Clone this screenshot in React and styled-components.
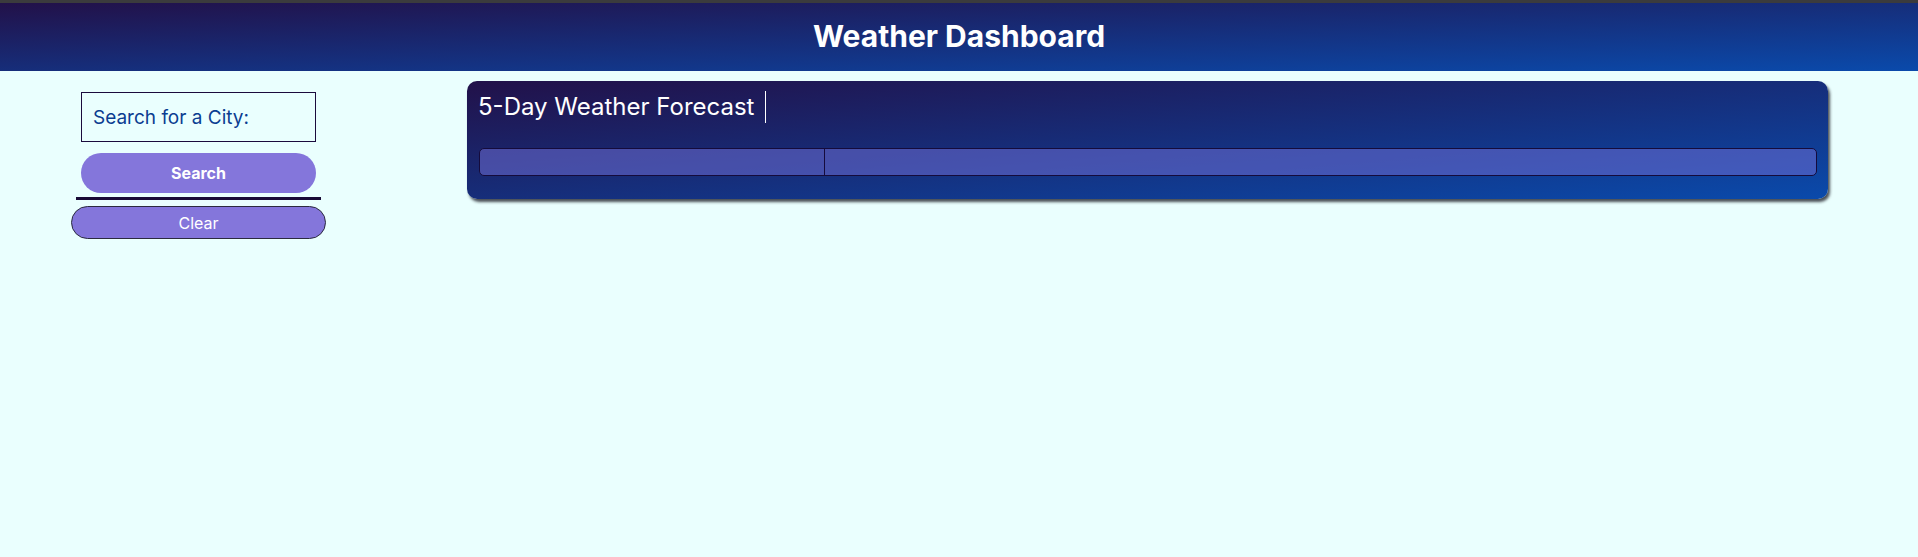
import styled, { createGlobalStyle } from "styled-components";

const GlobalStyle = createGlobalStyle`
  * {
    box-sizing: border-box;
  }

  body {
    margin: 0;
    background: #eafffe;
    font-family: Inter, "Noto Sans", sans-serif;
  }
`;

const Header = styled.header`
  display: flex;
  align-items: center;
  justify-content: center;
  height: 71px;
  padding-bottom: 3px;
  border-top: 3px solid #3b3b3d;
  background: linear-gradient(to bottom right, #221149, #0a4aab);
`;

const Title = styled.h1`
  margin: 0;
  color: #ffffff;
  font-size: 30px;
  font-weight: 700;
`;

const Layout = styled.main`
  display: grid;
  grid-template-columns: 397px 1fr;
  align-items: start;
`;

const Sidebar = styled.aside`
  display: flex;
  flex-direction: column;
  align-items: center;
  padding-top: 21px;
`;

const CityInput = styled.input`
  width: 235px;
  height: 50px;
  padding: 0 11px;
  border: 1px solid #1b0b3d;
  background: transparent;
  color: #0b3d91;
  font-family: inherit;
  font-size: 19px;

  &::placeholder {
    color: #0b3d91;
  }
`;

const PillButton = styled.button`
  width: ${(p) => (p.$wide ? "255px" : "235px")};
  height: ${(p) => (p.$wide ? "33px" : "40px")};
  margin-top: ${(p) => (p.$wide ? "6px" : "11px")};
  border: ${(p) => (p.$wide ? "1px solid #2b2b3f" : "none")};
  border-radius: 999px;
  background: #8476db;
  color: #ffffff;
  font-family: inherit;
  font-size: 16px;
  font-weight: ${(p) => (p.$wide ? 400 : 700)};
  cursor: pointer;
`;

const Divider = styled.hr`
  width: 245px;
  height: 3px;
  margin: 4px 0 0;
  border: none;
  background: #190b36;
`;

const Content = styled.section`
  padding: 10px 90px 0 70px;
`;

const ForecastPanel = styled.div`
  display: flex;
  flex-direction: column;
  padding: 10px 11px 23px 12px;
  border-radius: 10px;
  background: linear-gradient(to bottom right, #221149, #0a4aab);
  box-shadow: 2px 3px 3px rgba(20, 20, 30, 0.75);
`;

const PanelHeading = styled.h2`
  align-self: flex-start;
  margin: 0 0 0 -1px;
  padding-right: 11px;
  border-right: 1px solid #ffffff;
  color: #ffffff;
  font-size: 24px;
  font-weight: 400;
  line-height: 32px;
`;

const DayRow = styled.div`
  display: grid;
  grid-template-columns: 344px 1fr;
  height: 28px;
  margin-top: 25px;
  border: 1px solid #150b3c;
  border-radius: 5px;
  overflow: hidden;
  background: rgba(110, 110, 212, 0.55);
`;

const DayCell = styled.div`
  & + & {
    border-left: 1px solid #150b3c;
  }
`;

export default function App() {
  return (
    <>
      <GlobalStyle />
      <Header>
        <Title>Weather Dashboard</Title>
      </Header>
      <Layout>
        <Sidebar>
          <CityInput type="text" placeholder="Search for a City:" />
          <PillButton type="button">Search</PillButton>
          <Divider />
          <PillButton type="button" $wide>
            Clear
          </PillButton>
        </Sidebar>
        <Content>
          <ForecastPanel>
            <PanelHeading>5-Day Weather Forecast</PanelHeading>
            <DayRow>
              <DayCell />
              <DayCell />
            </DayRow>
          </ForecastPanel>
        </Content>
      </Layout>
    </>
  );
}
